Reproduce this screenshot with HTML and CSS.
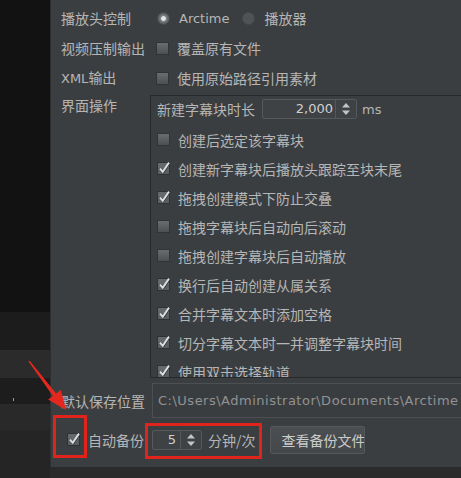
FILE: index.html
```html
<!DOCTYPE html>
<html lang="zh-CN">
<head>
  <meta charset="UTF-8" />
  <title>偏好设置</title>
  <link rel="stylesheet" href="styles.css">
</head>
<body>
  <svg width="0" height="0" class="defs">
    <defs>
      <symbol id="checked" viewBox="0 0 16 16" overflow="visible">
        <rect x="2.5" y="3.5" width="12" height="12" fill="#5c5f62" stroke="#2f3133"/>
        <rect x="3" y="4" width="11" height="5" fill="#66696c"/>
        <path d="M5 9.6 L7.8 12.8 L14 3.6" fill="none" stroke="#2b2c2e" stroke-width="1.4" transform="translate(0.8 0.6)"/>
        <path d="M5 9.6 L7.8 12.8 L14 3.6" fill="none" stroke="#e0e0e0" stroke-width="1.9"/>
      </symbol>
      <symbol id="spinarr" viewBox="0 0 10 14">
        <path d="M5 1 L9 5.5 L1 5.5 Z" fill="#c4c4c4"/>
        <path d="M5 13 L9 8.5 L1 8.5 Z" fill="#c4c4c4"/>
      </symbol>
    </defs>
  </svg>

  <div class="screen">

    <!-- timeline strip behind the dialog -->
    <div class="side">
      <div class="band b1"></div>
      <div class="band b2"></div>
      <div class="band b3"></div>
      <div class="band b4"><span class="tick"></span></div>
      <div class="band b5"></div>
      <div class="band b6"></div>
    </div>

    <div class="main">
      <div class="dialog">

        <div class="row">
          <div class="lbl">播放头控制</div>
          <div class="opts radios">
            <span class="radio on"></span><span class="lat">Arctime</span>
            <span class="radio"></span><span>播放器</span>
          </div>
        </div>

        <div class="row">
          <div class="lbl">视频压制输出</div>
          <div class="opts"><span class="box"></span><span>覆盖原有文件</span></div>
        </div>

        <div class="row">
          <div class="lbl"><span class="lat">XML</span>输出</div>
          <div class="opts"><span class="box"></span><span>使用原始路径引用素材</span></div>
        </div>

        <div class="row top">
          <div class="lbl">界面操作</div>
          <div class="panel">
            <div class="spinrow">
              <span>新建字幕块时长</span>
              <div class="spin">
                <span class="val">2,000</span>
                <span class="arr"><svg width="10" height="14"><use href="#spinarr"/></svg></span>
              </div>
              <span class="lat unit">ms</span>
            </div>
            <div class="item"><span class="box"></span><span>创建后选定该字幕块</span></div>
            <div class="item"><svg class="cb" width="16" height="16"><use href="#checked"/></svg><span>创建新字幕块后播放头跟踪至块末尾</span></div>
            <div class="item"><svg class="cb" width="16" height="16"><use href="#checked"/></svg><span>拖拽创建模式下防止交叠</span></div>
            <div class="item"><span class="box"></span><span>拖拽字幕块后自动向后滚动</span></div>
            <div class="item"><span class="box"></span><span>拖拽创建字幕块后自动播放</span></div>
            <div class="item"><svg class="cb" width="16" height="16"><use href="#checked"/></svg><span>换行后自动创建从属关系</span></div>
            <div class="item"><svg class="cb" width="16" height="16"><use href="#checked"/></svg><span>合并字幕文本时添加空格</span></div>
            <div class="item"><svg class="cb" width="16" height="16"><use href="#checked"/></svg><span>切分字幕文本时一并调整字幕块时间</span></div>
            <div class="item"><svg class="cb" width="16" height="16"><use href="#checked"/></svg><span>使用双击选择轨道</span></div>
          </div>
        </div>

        <div class="row save">
          <div class="lbl">默认保存位置</div>
          <div class="path">C:\Users\Administrator\Documents\Arctime</div>
        </div>

        <div class="row backup">
          <div class="lbl check-lbl"><svg class="cb" width="16" height="16"><use href="#checked"/></svg><span>自动备份</span></div>
          <div class="spin small">
            <span class="val">5</span>
            <span class="arr"><svg width="10" height="14"><use href="#spinarr"/></svg></span>
          </div>
          <span class="unit2">分钟/次</span>
          <button type="button" class="btn">查看备份文件</button>
        </div>

      </div>
      <div class="under"></div>
    </div>

    <!-- callout marks -->
    <div class="mark mark-check"></div>
    <div class="mark mark-spin"></div>
    <svg class="arrow" width="461" height="478">
      <polygon points="29.5,360.6 56.1,393.6 60.9,390 66,410 48.1,399.6 52.9,396 28.5,361.4" fill="#e5281f"/>
    </svg>

  </div>
</body>
</html>
```

FILE: styles.css
```css
html, body {
  margin: 0;
  padding: 0;
}

body {
  background-color: #121212;
  width: 461px;
  height: 478px;
  overflow: hidden;
  font-family: "Noto Sans CJK SC", "DejaVu Sans", sans-serif;
  font-size: 14px;
  color: #b6b6b6;
}

.defs {
  position: absolute;
}

.screen {
  position: relative;
  display: flex;
  height: 478px;
}

.lat {
  font-family: "DejaVu Sans", sans-serif;
  font-size: 13px;
}

/* left strip */
.side {
  width: 50px;
  flex: none;
  display: flex;
  flex-direction: column;
}

.b1 { height: 312px; background-color: #121212; }
.b2 { height: 38px; background-color: #1c1c1c; }
.b3 { height: 28px; background-color: #2b2b2b; }
.b4 { height: 26px; background-color: #1d1d1d; }
.b5 { height: 26px; background-color: #292929; }
.b6 { flex: 1; background-color: #252525; }

.tick {
  display: block;
  width: 1px;
  height: 3px;
  margin: 20px 0 0 13px;
  background-color: #9a9a9a;
}

/* dialog */
.main {
  flex: 1;
  min-width: 0;
  display: flex;
  flex-direction: column;
}

.dialog {
  height: 467px;
  box-sizing: border-box;
  background-color: #3b3e41;
  border-left: 1px solid #2c2e30;
  padding: 3px 0 0 10px;
  overflow: hidden;
}

.under {
  flex: 1;
  background-color: #2b2b2b;
}

.row {
  display: flex;
  align-items: center;
  height: 30px;
}

.lbl {
  width: 89px;
  flex: none;
  white-space: nowrap;
  line-height: 20px;
}

.opts {
  display: flex;
  align-items: center;
  gap: 8px;
  padding-left: 6px;
  white-space: nowrap;
}

.radios {
  padding-left: 7px;
  gap: 9px;
}

.radios .lat {
  margin-right: 4px;
}

.radio {
  width: 13px;
  height: 13px;
  box-sizing: border-box;
  border-radius: 50%;
  background-color: #505356;
  border: 1px solid #46494c;
}

.radio.on {
  background: radial-gradient(circle, #e4e4e4 0 2px, #8a8d90 2.6px, #6a6d70 4px, #5a5d60 6px);
  border-color: #4a4d50;
}

.box {
  width: 13px;
  height: 13px;
  flex: none;
  box-sizing: border-box;
  background: linear-gradient(#6a6d70, #4d5053);
  border: 1px solid #313335;
}

/* checked box is drawn 16px wide so the tick can poke out of the top */
.cb {
  flex: none;
  margin: -4px -1px 0 -2px;
  overflow: visible;
}

/* interface options panel */
.row.top {
  height: auto;
  align-items: flex-start;
  margin-top: 2px;
}

.panel {
  flex: 1;
  height: 283px;
  box-sizing: border-box;
  border: 1px solid #27292b;
  border-right: none;
  padding: 2px 0 0 6px;
  overflow: hidden;
  white-space: nowrap;
}

.spinrow {
  display: flex;
  align-items: center;
  height: 22px;
  margin-bottom: 5px;
}

.spin {
  display: flex;
  margin-left: 7px;
  width: 95px;
  height: 20px;
  box-sizing: border-box;
  border: 1px solid #56595c;
  border-radius: 2px;
  background-color: #3f4245;
}

.spin .val {
  flex: 1;
  text-align: right;
  padding-right: 2px;
  font-family: "DejaVu Sans", sans-serif;
  font-size: 13px;
  line-height: 18px;
  color: #d0d0d0;
}

.spin .arr {
  width: 20px;
  border-left: 1px solid #55585b;
  display: flex;
  align-items: center;
  justify-content: center;
}

.unit {
  margin-left: 5px;
}

.item {
  display: flex;
  align-items: center;
  gap: 8px;
  height: 29px;
}

/* save location */
.row.save {
  height: 35px;
  margin-top: 5px;
}

.path {
  flex: 1;
  margin-left: 2px;
  height: 35px;
  box-sizing: border-box;
  border: 1px solid #4d5053;
  border-right: none;
  background-color: #3a3d40;
  padding-left: 5px;
  font-family: "DejaVu Sans", sans-serif;
  font-size: 13px;
  letter-spacing: 0.5px;
  line-height: 33px;
  color: #909294;
  white-space: nowrap;
  overflow: hidden;
}

/* backup */
.row.backup {
  height: 40px;
  margin-top: 2px;
}

.check-lbl {
  display: flex;
  align-items: center;
  gap: 8px;
  padding-left: 6px;
  width: 83px;
}

.spin.small {
  width: 50px;
  margin-left: 2px;
}

.spin.small .val {
  padding-right: 4px;
}

.unit2 {
  margin-left: 6px;
  white-space: nowrap;
}

.btn {
  margin-left: 14px;
  width: 95px;
  height: 28px;
  box-sizing: border-box;
  border: 1px solid #56595c;
  border-radius: 2px;
  background: linear-gradient(#4c4f52, #45484b);
  padding: 0 0 0 11px;
  text-align: left;
  white-space: nowrap;
  overflow: hidden;
  font-family: "Noto Sans CJK SC", sans-serif;
  font-size: 14px;
  color: #cccccc;
}

/* red callouts */
.mark {
  position: absolute;
  box-sizing: border-box;
  border: 3px solid #e0241c;
}

.mark-check {
  left: 53px;
  top: 415px;
  width: 34px;
  height: 43px;
}

.mark-spin {
  left: 145px;
  top: 423px;
  width: 117px;
  height: 36px;
}

.arrow {
  position: absolute;
  left: 0;
  top: 0;
  pointer-events: none;
}
```
